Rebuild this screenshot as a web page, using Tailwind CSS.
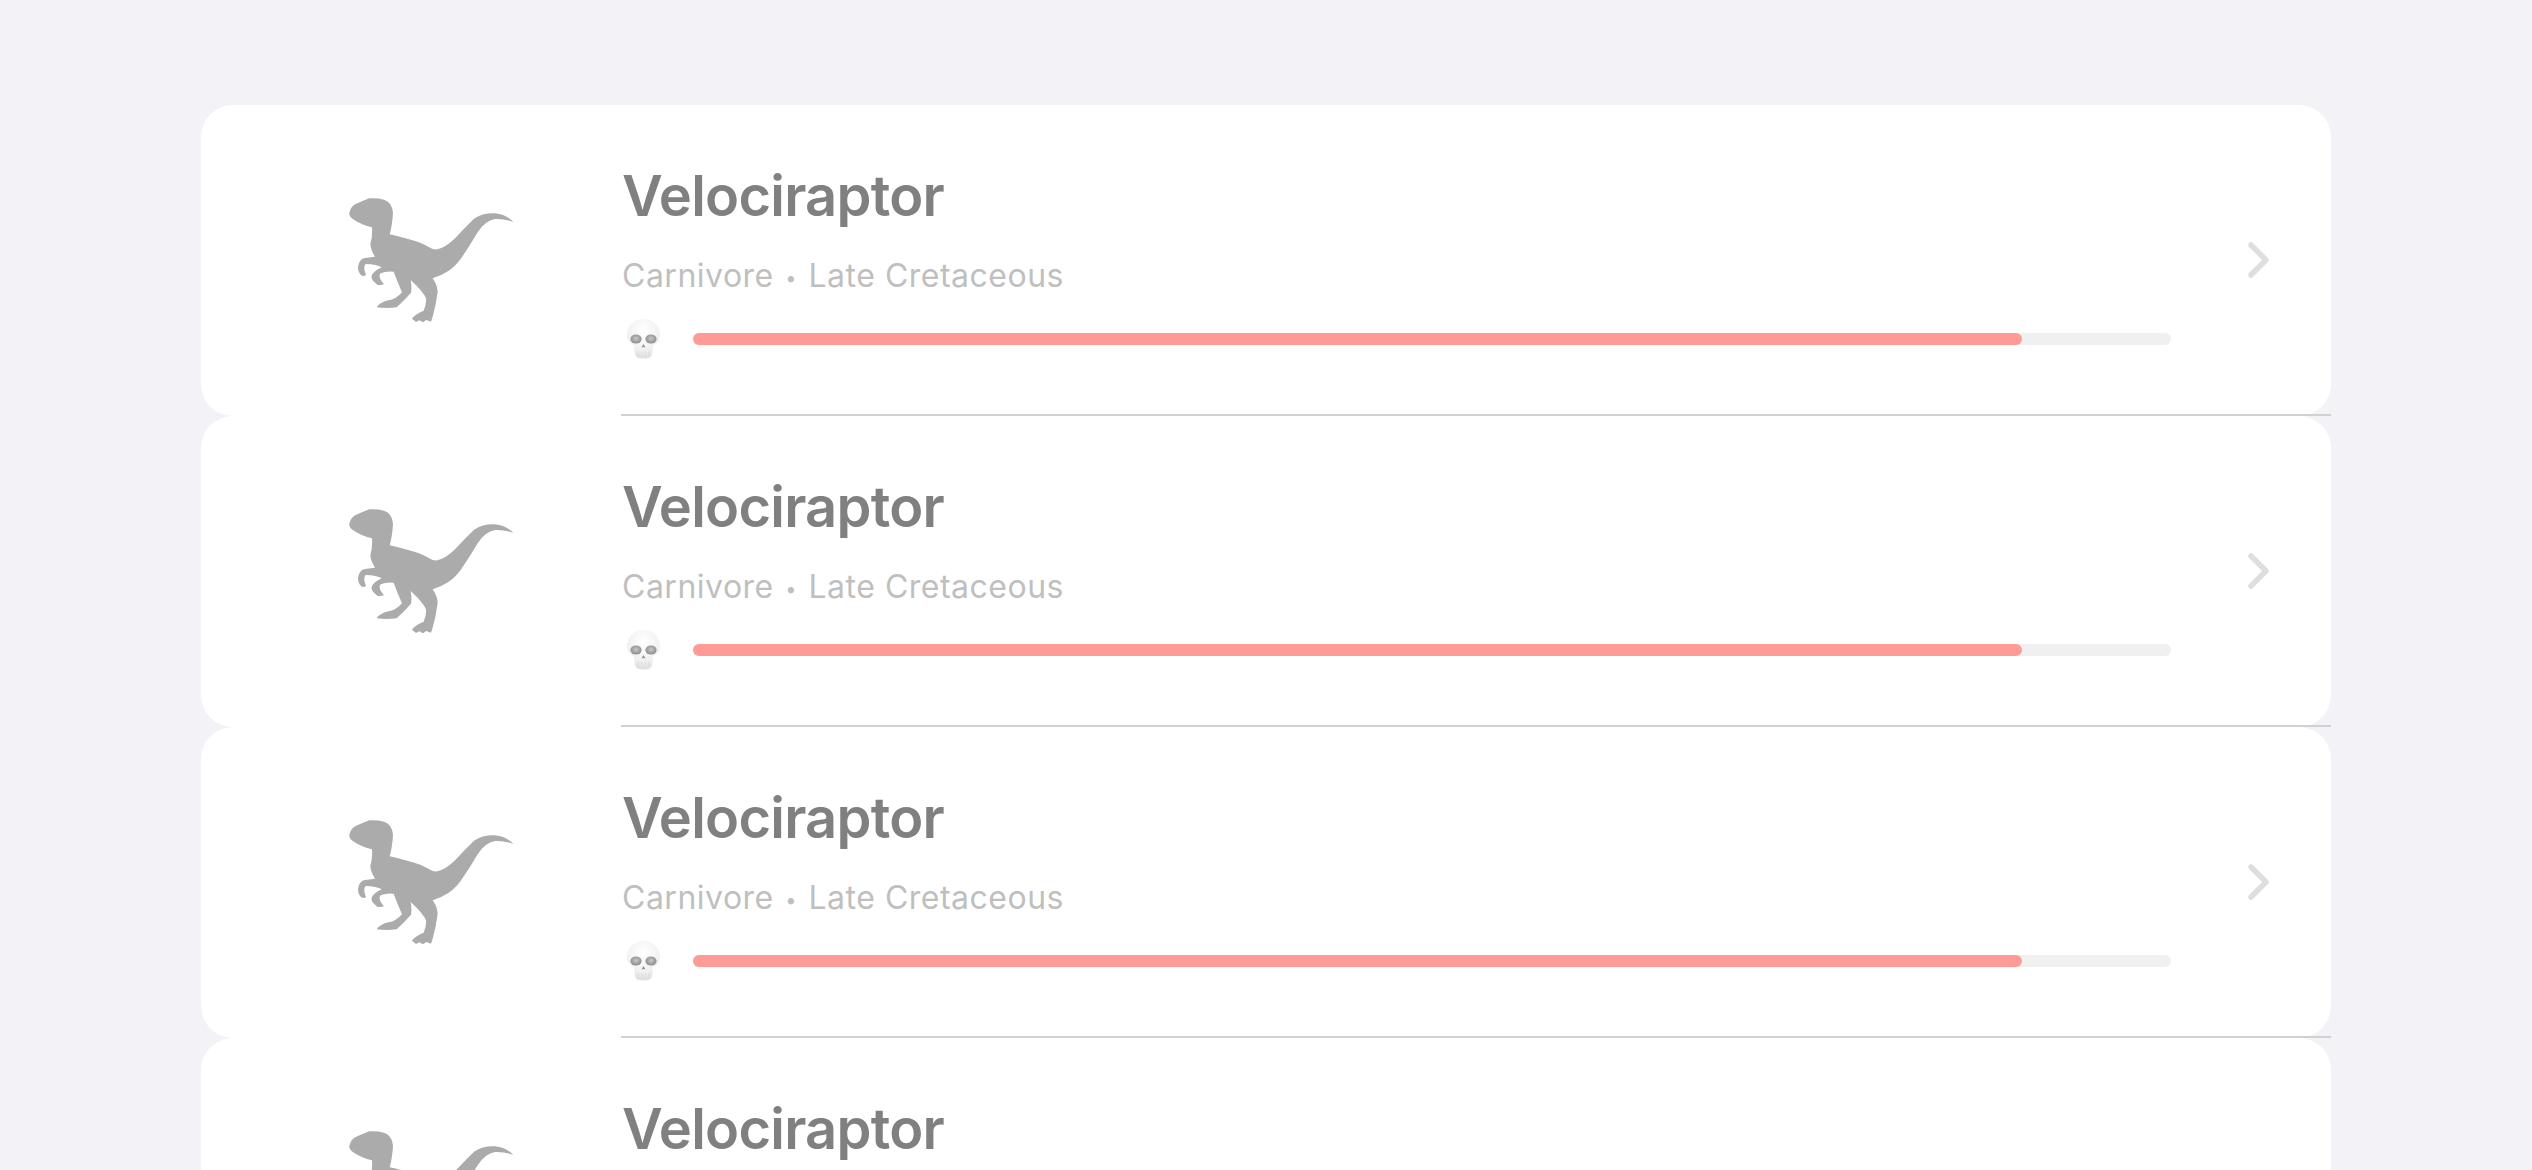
<!DOCTYPE html>
<html lang="en">
  <head>
    <meta charset="UTF-8" />
    <title>Dinosaurs</title>
    <script src="https://cdn.jsdelivr.net/npm/@tailwindcss/browser@4"></script>
  </head>
  <body class="bg-[#f2f2f7] h-[1170px] overflow-hidden font-['Inter',sans-serif]">
    <!-- shared icons -->
    <svg class="absolute w-0 h-0">
      <defs>
        <radialGradient id="bone" cx="50%" cy="30%" r="75%">
          <stop offset="0%" stop-color="#ffffff" />
          <stop offset="65%" stop-color="#f1f1f1" />
          <stop offset="100%" stop-color="#d9d9d9" />
        </radialGradient>
        <radialGradient id="socket" cx="50%" cy="45%" r="60%">
          <stop offset="0%" stop-color="#c8c8c8" />
          <stop offset="100%" stop-color="#858585" />
        </radialGradient>
        <symbol id="raptor" viewBox="0 0 660 510">
          <path fill="#ababab" d="M88 128 Q92 108 112 100 Q130 92 148 85 Q175 84 192 89 Q216 96 219 128 Q217 165 209 193 Q240 200 262 206 Q300 215 325 230 Q340 240 352 238 Q378 232 405 205 Q435 172 462 146 Q490 128 525 130 Q558 133 580 156 Q555 146 525 147 Q495 152 472 188 Q452 222 432 252 Q412 285 385 303 Q362 318 338 325 Q352 345 353 365 Q348 405 338 440 L333 455 L319 450 L309 457 L298 451 L288 456 L276 446 Q285 432 311 422 Q320 400 318 385 Q310 365 272 330 Q276 352 273 368 Q252 392 230 412 Q200 416 170 412 Q178 398 205 391 Q228 388 246 367 Q232 335 221 305 Q200 302 182 310 Q172 320 192 343 Q180 347 172 344 Q152 330 155 318 Q160 303 185 292 Q170 283 137 282 Q128 292 138 315 Q128 322 120 312 Q110 298 117 280 Q122 266 135 264 L165 260 Q152 240 151 222 Q158 200 156 172 Q125 165 103 150 Q86 140 88 128 Z" />
        </symbol>
        <symbol id="skull" viewBox="0 0 33 40">
          <path fill="url(#bone)" d="M16.5 0 C26.5 0 33 7 33 16 C33 21 30.5 24.5 26 26.5 L25 35 Q24.5 39.5 16.5 39.5 Q8.5 39.5 8 35 L7 26.5 C2.5 24.5 0 21 0 16 C0 7 6.5 0 16.5 0 Z" />
          <ellipse cx="9" cy="20" rx="5.6" ry="4.6" fill="url(#socket)" />
          <ellipse cx="24" cy="20" rx="5.6" ry="4.6" fill="url(#socket)" />
          <path fill="#8f8f8f" d="M16.5 25 L18.5 28.5 Q16.5 27.5 14.5 28.5 Z" />
          <path stroke="#dcdcdc" stroke-width="0.8" d="M11.5 32 V37 M14.8 32 V38 M18.2 32 V38 M21.5 32 V37" />
        </symbol>
      </defs>
    </svg>

    <div class="pt-[105px] px-[201px]">

      <!-- Row 1 -->
      <div class="flex h-[311px] bg-white rounded-[32px]">
        <div class="w-[420px] shrink-0 flex items-center pl-[119px] pb-[11px]">
          <svg class="w-[220px] h-[170px]"><use href="#raptor" /></svg>
        </div>
        <div class="flex-1 flex items-center border-b-2 border-[#d1d1d3]">
          <div class="w-[1550px] self-start pt-[57px]">
            <h2 class="text-[56px] leading-[68px] font-semibold tracking-[-0.75px] text-[#808080] ml-[1px]">Velociraptor</h2>
            <p class="mt-[26px] text-[32px] leading-[40px] tracking-[0.5px] text-[#bfbfbf] ml-[1px]">Carnivore <span class="text-[20px] leading-none align-[2px] mx-[2px]">•</span> Late Cretaceous</p>
            <div class="mt-[23px] flex items-center">
              <svg class="ml-[6px] w-[33px] h-[40px]"><use href="#skull" /></svg>
              <div class="ml-[33px] flex-1 h-3 rounded-full bg-[#f0f0f0]">
                <div class="w-[1329px] h-3 rounded-full bg-[#fe9b97]"></div>
              </div>
            </div>
          </div>
          <svg class="ml-[76px] w-[24px] h-[38px]" viewBox="0 0 24 38" fill="none" stroke="#dedede" stroke-width="5.5" stroke-linecap="round" stroke-linejoin="round"><path d="M4 4 L19 19 L4 34" /></svg>
        </div>
      </div>

      <!-- Row 2 -->
      <div class="flex h-[311px] bg-white rounded-[32px]">
        <div class="w-[420px] shrink-0 flex items-center pl-[119px] pb-[11px]">
          <svg class="w-[220px] h-[170px]"><use href="#raptor" /></svg>
        </div>
        <div class="flex-1 flex items-center border-b-2 border-[#d1d1d3]">
          <div class="w-[1550px] self-start pt-[57px]">
            <h2 class="text-[56px] leading-[68px] font-semibold tracking-[-0.75px] text-[#808080] ml-[1px]">Velociraptor</h2>
            <p class="mt-[26px] text-[32px] leading-[40px] tracking-[0.5px] text-[#bfbfbf] ml-[1px]">Carnivore <span class="text-[20px] leading-none align-[2px] mx-[2px]">•</span> Late Cretaceous</p>
            <div class="mt-[23px] flex items-center">
              <svg class="ml-[6px] w-[33px] h-[40px]"><use href="#skull" /></svg>
              <div class="ml-[33px] flex-1 h-3 rounded-full bg-[#f0f0f0]">
                <div class="w-[1329px] h-3 rounded-full bg-[#fe9b97]"></div>
              </div>
            </div>
          </div>
          <svg class="ml-[76px] w-[24px] h-[38px]" viewBox="0 0 24 38" fill="none" stroke="#dedede" stroke-width="5.5" stroke-linecap="round" stroke-linejoin="round"><path d="M4 4 L19 19 L4 34" /></svg>
        </div>
      </div>

      <!-- Row 3 -->
      <div class="flex h-[311px] bg-white rounded-[32px]">
        <div class="w-[420px] shrink-0 flex items-center pl-[119px] pb-[11px]">
          <svg class="w-[220px] h-[170px]"><use href="#raptor" /></svg>
        </div>
        <div class="flex-1 flex items-center border-b-2 border-[#d1d1d3]">
          <div class="w-[1550px] self-start pt-[57px]">
            <h2 class="text-[56px] leading-[68px] font-semibold tracking-[-0.75px] text-[#808080] ml-[1px]">Velociraptor</h2>
            <p class="mt-[26px] text-[32px] leading-[40px] tracking-[0.5px] text-[#bfbfbf] ml-[1px]">Carnivore <span class="text-[20px] leading-none align-[2px] mx-[2px]">•</span> Late Cretaceous</p>
            <div class="mt-[23px] flex items-center">
              <svg class="ml-[6px] w-[33px] h-[40px]"><use href="#skull" /></svg>
              <div class="ml-[33px] flex-1 h-3 rounded-full bg-[#f0f0f0]">
                <div class="w-[1329px] h-3 rounded-full bg-[#fe9b97]"></div>
              </div>
            </div>
          </div>
          <svg class="ml-[76px] w-[24px] h-[38px]" viewBox="0 0 24 38" fill="none" stroke="#dedede" stroke-width="5.5" stroke-linecap="round" stroke-linejoin="round"><path d="M4 4 L19 19 L4 34" /></svg>
        </div>
      </div>

      <!-- Row 4, cut off by the window -->
      <div class="flex h-[311px] bg-white rounded-[32px]">
        <div class="w-[420px] shrink-0 flex items-center pl-[119px] pb-[11px]">
          <svg class="w-[220px] h-[170px]"><use href="#raptor" /></svg>
        </div>
        <div class="flex-1 flex items-center">
          <div class="w-[1550px] self-start pt-[57px]">
            <h2 class="text-[56px] leading-[68px] font-semibold tracking-[-0.75px] text-[#808080] ml-[1px]">Velociraptor</h2>
          </div>
        </div>
      </div>

    </div>
  </body>
</html>
